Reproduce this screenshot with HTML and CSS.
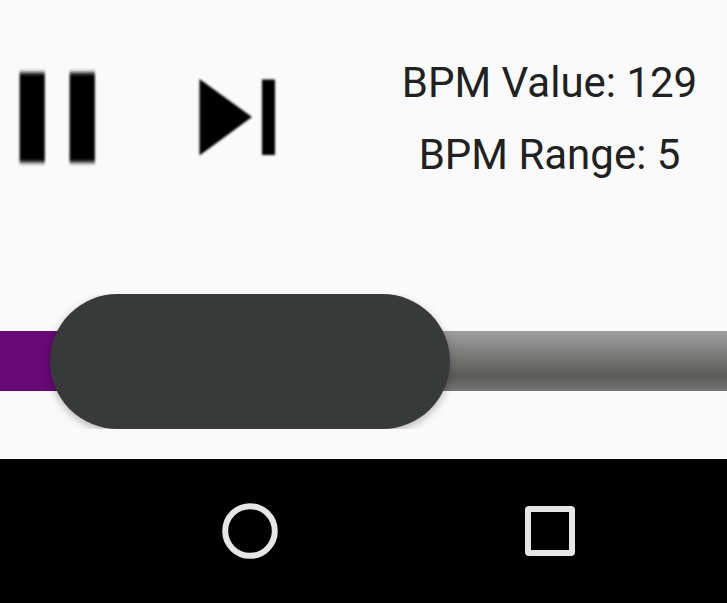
FILE: index.html
```html
<!DOCTYPE html>
<html lang="en">
<head>
<meta charset="utf-8">
<title>BPM Player</title>
<link rel="stylesheet" href="styles.css">
</head>
<body>
<main class="player">
  <div class="controls">
    <button class="control" aria-label="Pause">
      <svg width="110" height="120" viewBox="0 0 110 120">
        <defs><filter id="pause-edge" x="-20%" y="-20%" width="140%" height="140%"><feGaussianBlur stdDeviation="1 2.2"/></filter></defs>
        <g filter="url(#pause-edge)"><path d="M19.6 14.5H44.8V104.4H19.6ZM69.6 14.5H94.9V104.4H69.6Z"/></g>
      </svg>
    </button>
    <button class="control next" aria-label="Next">
      <svg width="110" height="120" viewBox="0 0 110 120">
        <defs><filter id="next-edge" x="-20%" y="-20%" width="140%" height="140%"><feGaussianBlur stdDeviation="1"/></filter></defs>
        <g filter="url(#next-edge)"><path d="M14.5 21L67 59L14.5 97.5ZM77 21.5H90V97H77Z"/></g>
      </svg>
    </button>
    <div class="bpm">
      <div>BPM Value: 129</div>
      <div>BPM Range: 5</div>
    </div>
  </div>
  <div class="slider">
    <div class="filled"></div>
    <div class="thumb"></div>
    <div class="track"></div>
  </div>
</main>
<nav class="navbar">
  <svg class="home" width="60" height="60" viewBox="0 0 60 60"><circle cx="30" cy="30" r="24.8"/></svg>
  <svg class="recent" width="60" height="60" viewBox="0 0 60 60"><rect x="8" y="8" width="44" height="44" rx="1"/></svg>
</nav>
</body>
</html>
```
FILE: styles.css
```css
* { box-sizing: border-box; }
body {
  margin: 0;
  width: 727px;
  height: 603px;
  overflow: hidden;
  background: #fafafa;
  color: #212121;
  font-family: Roboto, sans-serif;
}
.player { height: 459px; }
.controls {
  display: flex;
  height: 294px;
  padding-top: 58px;
}
.control {
  width: 110px;
  height: 120px;
  padding: 0;
  border: 0;
  background: none;
}
.control svg { display: block; }
.next { margin-left: 75px; }
.bpm {
  width: 309px;
  margin-left: 100px;
  margin-top: -11px;
  font-size: 42px;
  line-height: 72px;
  text-align: center;
  white-space: nowrap;
}
.slider {
  display: flex;
  align-items: center;
  height: 135px;
  overflow: hidden;
}
.filled {
  width: 120px;
  height: 60px;
  margin-right: -70px;
  margin-bottom: 1px;
  background: #660875;
}
.thumb {
  position: relative;
  z-index: 1;
  flex: none;
  width: 400px;
  height: 135px;
  border-radius: 68px;
  background: #383a39;
  box-shadow: 0 3px 9px rgba(0, 0, 0, .27);
}
.track {
  flex: 1;
  height: 60px;
  margin-left: -70px;
  margin-bottom: 1px;
  background: linear-gradient(#9e9e9e, #5a5c58 75%, #757575);
}
.navbar {
  display: flex;
  align-items: center;
  gap: 240px;
  height: 144px;
  padding-left: 220px;
  background: #000;
}
.navbar svg {
  fill: none;
  stroke: #e6e6e6;
  stroke-width: 6;
}
```
